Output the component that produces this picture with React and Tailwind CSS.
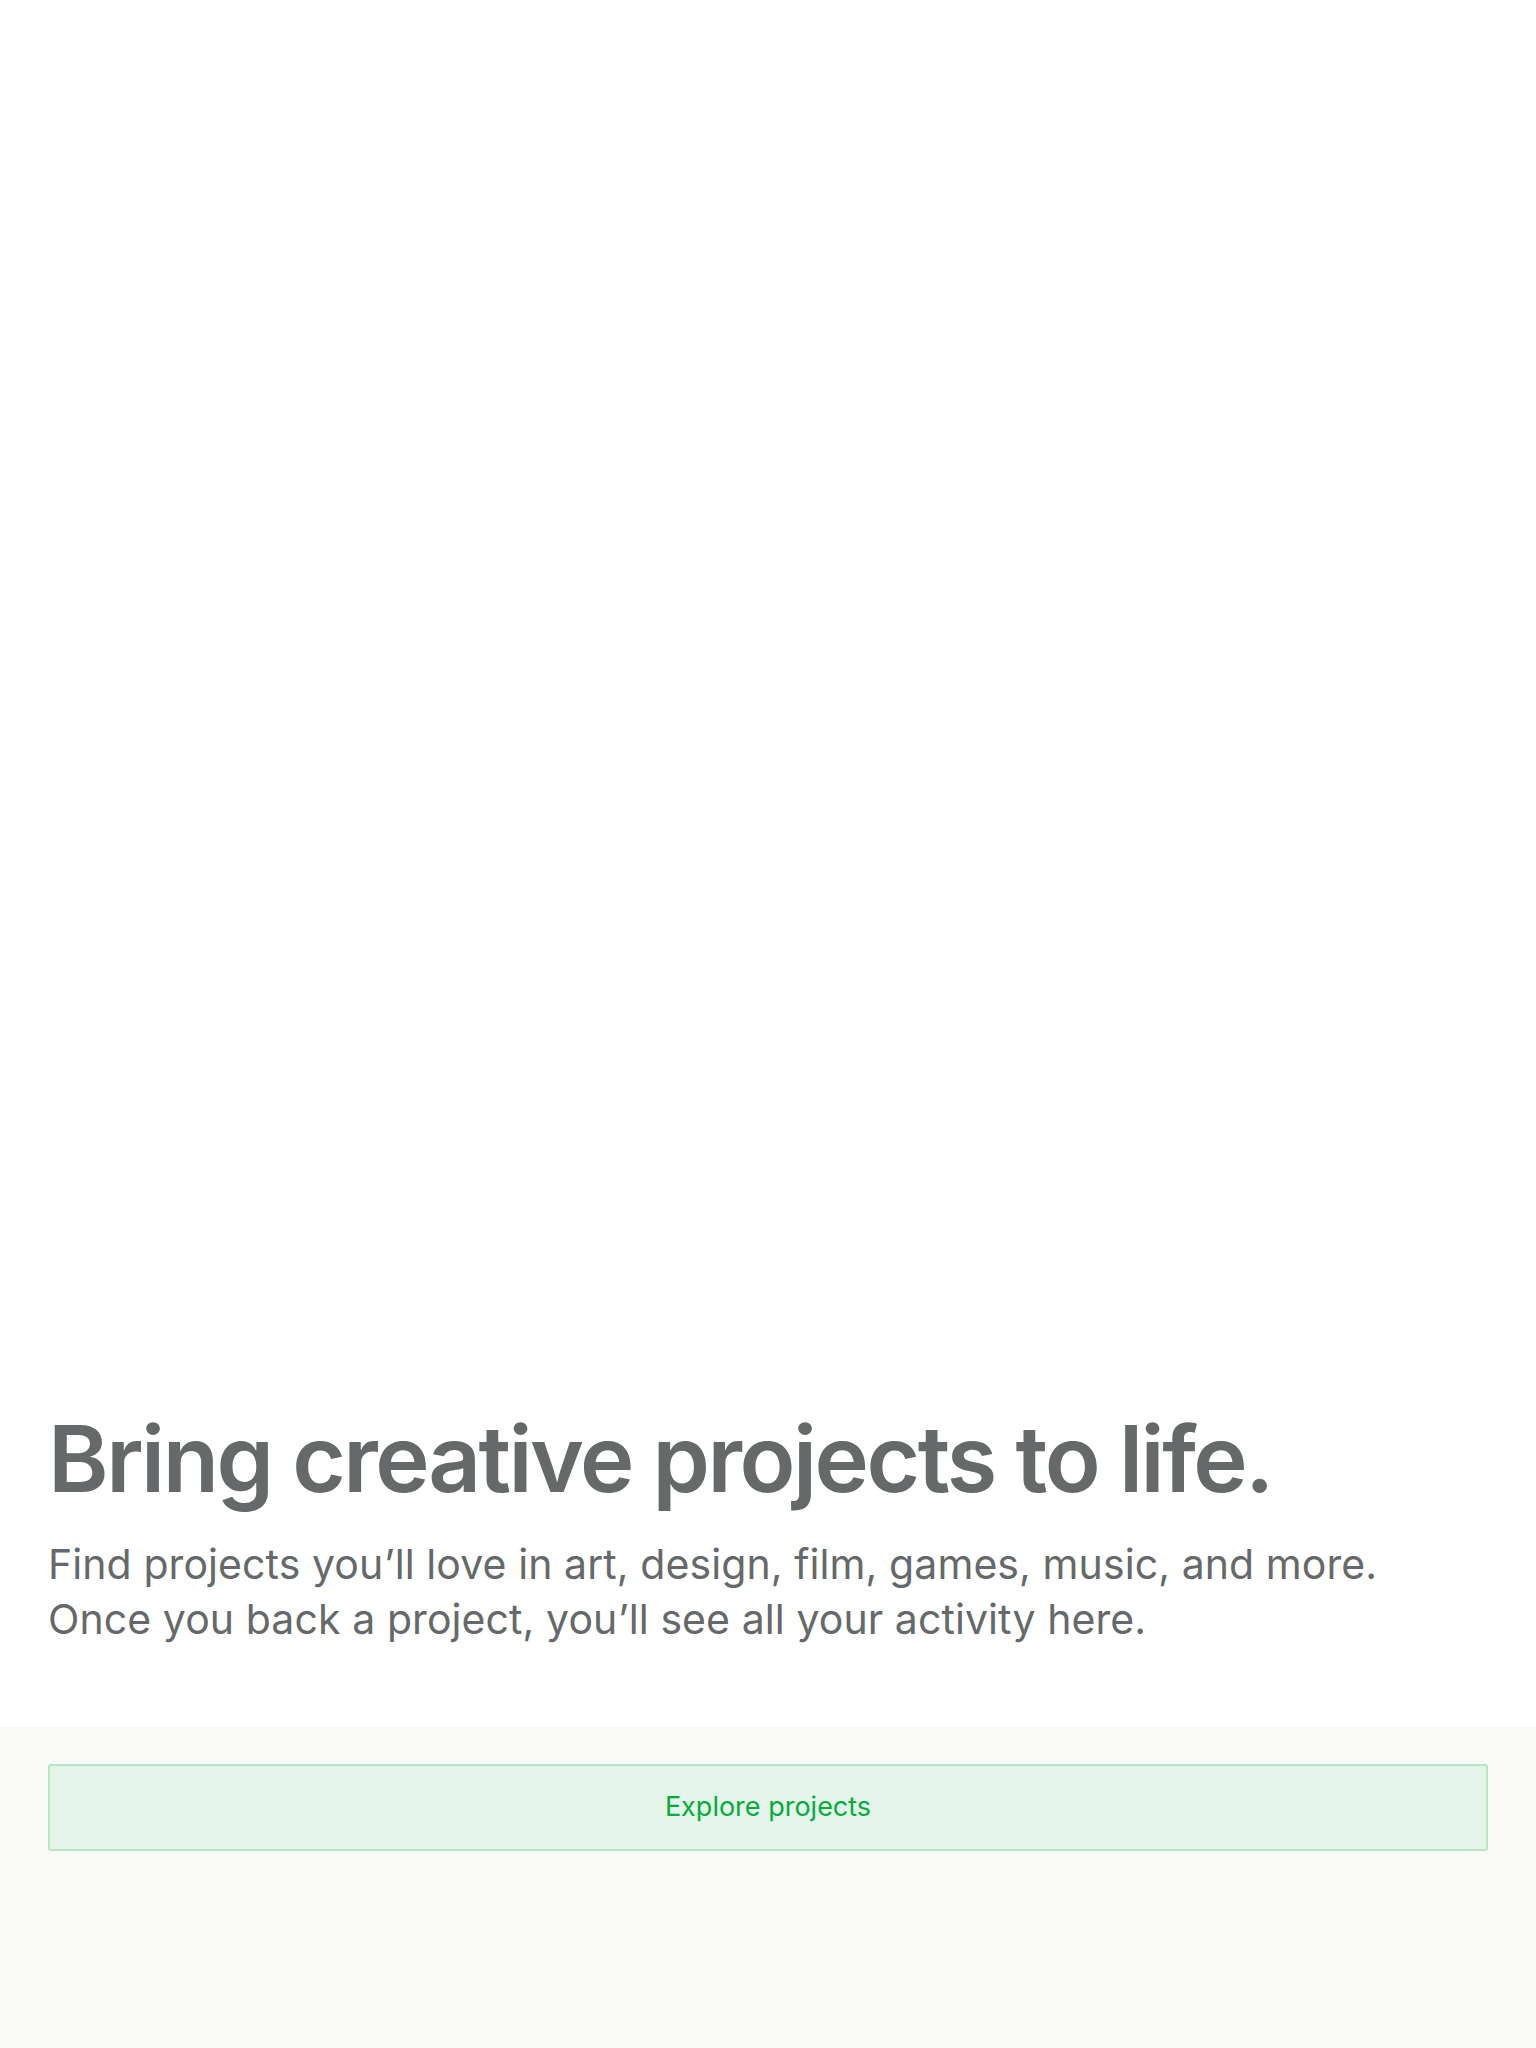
export default function App() {
  return (
    <div className="flex min-h-[2048px] w-full flex-col bg-white" style={{ fontFamily: "Inter, 'Noto Sans', sans-serif" }}>
      <div className="flex h-[1727px] flex-col justify-end px-12 pb-[80px]">
        <h1 className="text-[92px] font-semibold leading-[100px] tracking-[-0.027em] text-[#656969]">
          Bring creative projects to life.
        </h1>
        <p className="mt-[28px] text-[41px] leading-[55px] tracking-[0.002em] text-[#656969]">
          Find projects you’ll love in art, design, film, games, music, and more.
          <br />
          Once you back a project, you’ll see all your activity here.
        </p>
      </div>
      <div className="flex-1 bg-[#fafaf9] px-12 pt-[37px]">
        <button className="flex h-[87px] w-full items-center justify-center rounded-[3px] border-2 border-[#b6e6c6] bg-[#e4f4ea] text-[27px] text-[#05ac3c]">
          Explore projects
        </button>
      </div>
    </div>
  );
}
